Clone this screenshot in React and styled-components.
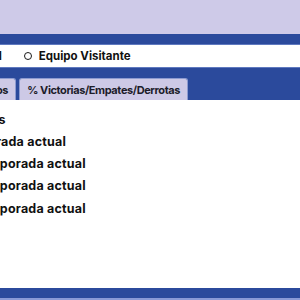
import React, { useState } from "react";
import styled, { createGlobalStyle } from "styled-components";

const Global = createGlobalStyle`
  html, body { margin: 0; padding: 0; background: #ffffff; }
  body { font-family: Inter, "Open Sans", Arial, sans-serif; overflow: hidden; }
`;

const Frame = styled.div`
  width: 300px;
  height: 300px;
  overflow: hidden;
  display: flex;
  flex-direction: column;
  background: #ffffff;
`;

const Canvas = styled.div`
  width: 460px;
  margin-left: -160px;
  display: flex;
  flex-direction: column;
  flex: 1;
`;

const Header = styled.div`
  height: 34px;
  background: #cecae8;
  flex-shrink: 0;
`;

const BluePanel = styled.div`
  background: #2b4a9c;
  padding-top: 10px;
  display: flex;
  flex-direction: column;
`;

const RadioRow = styled.div`
  background: #ffffff;
  border-top: 1px solid #5f79bf;
  border-bottom: 1px solid #5f79bf;
  height: 22px;
  display: flex;
  align-items: center;
  gap: 22px;
  padding-left: ${(p) => p.$indent}px;
`;

const RadioItem = styled.label`
  display: flex;
  align-items: center;
  gap: 7px;
  font-size: 11.5px;
  font-weight: 700;
  color: #111111;
  cursor: pointer;
`;

const RadioDot = styled.span`
  width: 8px;
  height: 8px;
  box-sizing: border-box;
  border-radius: 50%;
  border: 1.6px solid #1a1a1a;
  background: ${(p) => (p.$on ? "#1a1a1a" : "transparent")};
`;

const TabBar = styled.div`
  display: flex;
  align-items: flex-end;
  gap: 3px;
  height: 32px;
  padding-left: ${(p) => p.$indent}px;
`;

const Tab = styled.div`
  height: 22px;
  box-sizing: border-box;
  padding: 0 7px;
  display: flex;
  align-items: center;
  background: #cdc9e6;
  border: 1px solid #8d9bd0;
  border-bottom: none;
  border-radius: 3px 3px 0 0;
  font-size: 11px;
  letter-spacing: -0.4px;
  font-weight: 700;
  color: #1c1c2a;
  white-space: nowrap;
`;

const Content = styled.div`
  flex: 1;
  display: flex;
  flex-direction: column;
  gap: 6.3px;
  padding: 11px 0 0 ${(p) => p.$indent}px;
`;

const Row = styled.div`
  height: 16px;
  display: flex;
  align-items: center;
  font-size: 12.5px;
  letter-spacing: 0.2px;
  font-weight: 700;
  color: #111111;
  white-space: nowrap;
  padding-left: ${(p) => p.$indent || 0}px;
`;

const Footer = styled.div`
  height: 10px;
  background: #2b4a9c;
  border-bottom: 2px solid #8a9ad6;
  flex-shrink: 0;
`;

export default function App() {
  const [team, setTeam] = useState("local");
  const rows = [
    { text: "Partidos", indent: 43 },
    { text: "Goles temporada actual", indent: 7 },
    { text: "Temporada actual", indent: 63 },
    { text: "Temporada actual", indent: 63 },
    { text: "Temporada actual", indent: 63 },
  ];
  return (
    <>
      <Global />
      <Frame>
        <Canvas>
          <Header />
          <BluePanel>
            <RadioRow $indent={75}>
              <RadioItem onClick={() => setTeam("local")}>
                <RadioDot $on={team === "local" && false} />
                Equipo Local
              </RadioItem>
              <RadioItem onClick={() => setTeam("visit")}>
                <RadioDot $on={false} />
                Equipo Visitante
              </RadioItem>
            </RadioRow>
            <TabBar $indent={76}>
              <Tab>Partidos jugados</Tab>
              <Tab>% Victorias/Empates/Derrotas</Tab>
            </TabBar>
          </BluePanel>
          <Content $indent={70}>
            {rows.map((r, i) => (
              <Row key={i} $indent={r.indent}>
                {r.text}
              </Row>
            ))}
          </Content>
          <Footer />
        </Canvas>
      </Frame>
    </>
  );
}
